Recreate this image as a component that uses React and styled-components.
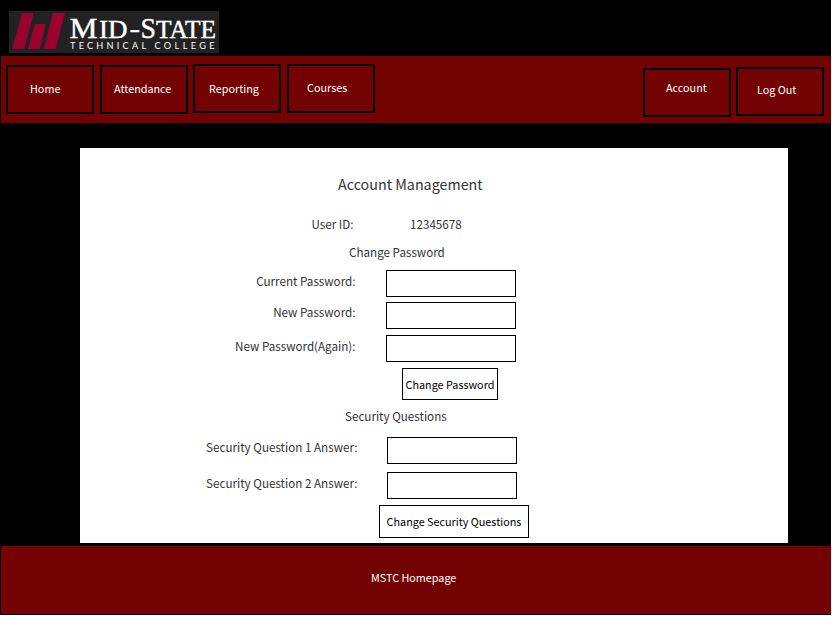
import React from "react";
import styled, { createGlobalStyle } from "styled-components";

const Global = createGlobalStyle`
  * { box-sizing: border-box; }
  html, body { margin: 0; background: #fff; }
  body { font-family: "Noto Sans CJK SC", "Noto Sans", sans-serif; overflow: hidden; }
  a { color: inherit; text-decoration: none; }
`;

const Page = styled.div`
  width: 831px;
  height: 615px;
  background: #000;
  display: flex;
  flex-direction: column;
`;

const Header = styled.header`
  height: 56px;
  padding: 11px 0 0 9px;
`;

const LogoArt = styled.svg`
  display: block;
  width: 210px;
  height: 42px;
  background: #222;
`;

const NavBar = styled.nav`
  height: 67px;
  margin-left: 1px;
  padding: 0 7px 0 5px;
  background: #730303;
  display: flex;
  align-items: flex-start;
`;

const NavItem = styled.a`
  flex: none;
  width: 88px;
  height: 49px;
  margin-top: ${(p) => p.$top}px;
  margin-left: ${(p) => p.$gap}px;
  padding: ${(p) => p.$textTop}px 0 0 ${(p) => p.$textLeft}px;
  border: 2px solid #000;
  color: #fff;
  font-size: 10.8px;
  line-height: 16px;
  white-space: nowrap;
`;

const Spacer = styled.div`
  flex: 1;
`;

const Panel = styled.main`
  width: 708px;
  height: 395px;
  margin: 25px 0 3px 80px;
  background: #fff;
  color: #333;
  font-size: 11.65px;
  line-height: 16px;
`;

const Title = styled.h1`
  height: 68px;
  margin: 0;
  padding: 25px 0 0 258px;
  font-size: 14.3px;
  font-weight: 400;
  line-height: 22px;
`;

const Subtitle = styled.h2`
  height: ${(p) => p.$height}px;
  margin: 0;
  padding: ${(p) => p.$top}px 0 0 ${(p) => p.$left}px;
  font-size: inherit;
  font-weight: 400;
`;

const Row = styled.div`
  display: grid;
  grid-template-columns: ${(p) => p.$label}px 1fr;
  column-gap: ${(p) => p.$gap}px;
  height: ${(p) => p.$height}px;
`;

const Label = styled.label`
  padding-top: ${(p) => p.$top}px;
  text-align: right;
  white-space: nowrap;
`;

const Value = styled.span`
  padding-top: ${(p) => p.$top}px;
`;

const Field = styled.input`
  width: 130px;
  height: 27px;
  padding: 0 4px;
  border: 1px solid #000;
  border-radius: 0;
  background: #fff;
  font: inherit;
  outline: none;
`;

const Action = styled.button`
  display: block;
  width: ${(p) => p.$width}px;
  height: ${(p) => p.$height}px;
  margin: 0 0 0 ${(p) => p.$left}px;
  padding: 0 0 1px;
  border: 1px solid #000;
  background: #fff;
  color: #000;
  font-family: inherit;
  font-size: 10.8px;
  line-height: 16px;
  white-space: nowrap;
`;

const Footer = styled.footer`
  height: 68px;
  margin-left: 1px;
  padding: 23px 0 0 370px;
  background: #730303;
  color: #fff;
  font-size: 10.8px;
  line-height: 16px;
`;

const Logo = () => (
  <LogoArt viewBox="0 0 210 42" role="img" aria-label="Mid-State Technical College">
    <g fill="#9a0330">
      <path d="M13 2H24.7L15.3 38H3.2Z" />
      <path d="M25.7 13H37L30.8 38H18.8Z" />
      <path d="M43.8 2H56L46.6 38H34.7Z" />
    </g>
    <g fill="#fff" stroke="#fff" strokeWidth="0.4" fontFamily="Liberation Serif, serif">
      <text x="60.5" y="27" fontSize="30" textLength="28" lengthAdjust="spacingAndGlyphs">M</text>
      <text x="90" y="27" fontSize="25.5" textLength="28.5" lengthAdjust="spacingAndGlyphs">ID</text>
      <text x="120.5" y="26" fontSize="25.5" textLength="10.5" lengthAdjust="spacingAndGlyphs">-</text>
      <text x="131.5" y="27" fontSize="30" textLength="15.5" lengthAdjust="spacingAndGlyphs">S</text>
      <text x="147" y="27" fontSize="25.5" textLength="60" lengthAdjust="spacingAndGlyphs">TATE</text>
    </g>
    <g fill="#fff" fontFamily="Lato, sans-serif" fontSize="9.2" letterSpacing="1.9">
      <text x="61" y="37.8" textLength="78">TECHNICAL</text>
      <text x="145.5" y="37.8" textLength="62">COLLEGE</text>
    </g>
  </LogoArt>
);

const passwords = [
  { label: "Current Password:", height: 32, top: 3 },
  { label: "New Password:", height: 33, top: 2 },
  { label: "New Password(Again):", height: 33, top: 3 },
];

const questions = [
  { label: "Security Question 1 Answer:", height: 35, top: 2 },
  { label: "Security Question 2 Answer:", height: 33, top: 3 },
];

export default function App() {
  return (
    <>
      <Global />
      <Page>
        <Header><Logo /></Header>
        <NavBar>
          <NavItem href="#" $top={9} $gap={0} $textTop={13} $textLeft={22}>Home</NavItem>
          <NavItem href="#" $top={9} $gap={6} $textTop={13} $textLeft={12}>Attendance</NavItem>
          <NavItem href="#" $top={8} $gap={5} $textTop={14} $textLeft={14}>Reporting</NavItem>
          <NavItem href="#" $top={8} $gap={6} $textTop={13} $textLeft={18}>Courses</NavItem>
          <Spacer />
          <NavItem href="#" $top={12} $gap={0} $textTop={9} $textLeft={21}>Account</NavItem>
          <NavItem href="#" $top={11} $gap={5} $textTop={12} $textLeft={19}>Log Out</NavItem>
        </NavBar>
        <Panel>
          <Title>Account Management</Title>
          <Row $label={273.5} $gap={56.5} $height={28}>
            <Label $top={0}>User ID:</Label>
            <Value $top={0}>12345678</Value>
          </Row>
          <Subtitle $height={26} $top={0} $left={269}>Change Password</Subtitle>
          {passwords.map((f) => (
            <Row key={f.label} $label={275.5} $gap={30.5} $height={f.height}>
              <Label $top={f.top}>{f.label}</Label>
              <Field type="password" aria-label={f.label} />
            </Row>
          ))}
          <Action $width={96} $height={32} $left={322}>Change Password</Action>
          <Subtitle $height={37} $top={8} $left={265}>Security Questions</Subtitle>
          {questions.map((f) => (
            <Row key={f.label} $label={277.5} $gap={29.5} $height={f.height}>
              <Label $top={f.top}>{f.label}</Label>
              <Field aria-label={f.label} />
            </Row>
          ))}
          <Action $width={150} $height={33} $left={299}>Change Security Questions</Action>
        </Panel>
        <Footer><a href="#">MSTC Homepage</a></Footer>
      </Page>
    </>
  );
}
